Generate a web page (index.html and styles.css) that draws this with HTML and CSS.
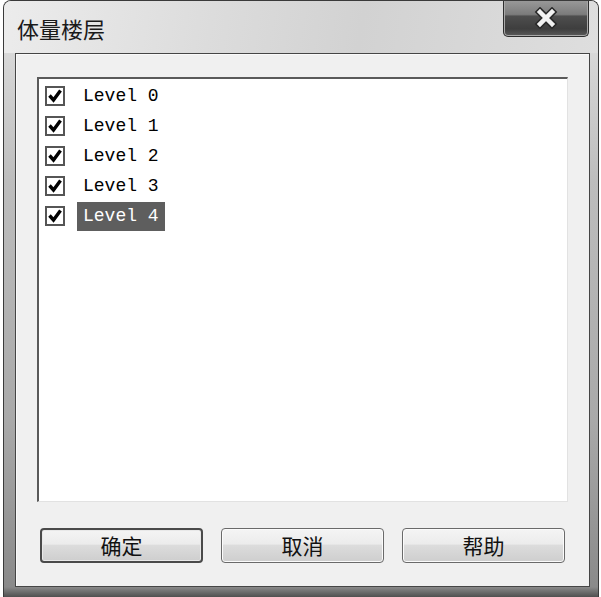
FILE: index.html
```html
<!DOCTYPE html>
<html lang="zh">
<head>
    <meta charset="UTF-8">
    <title>体量楼层</title>
    <link rel="stylesheet" href="styles.css">
</head>
<body>
    <div class="window">
        <div class="titlebar">
            <span class="title">体量楼层</span>
            <div class="close">
                <svg width="28" height="22" viewBox="0 0 28 22">
                    <path d="M8 5 L20 17 M20 5 L8 17" stroke="#2a2a2a" stroke-width="7.5" stroke-linecap="square"/>
                    <path d="M8 5 L20 17 M20 5 L8 17" stroke="#f2f2f2" stroke-width="4.5" stroke-linecap="square"/>
                </svg>
            </div>
        </div>

        <div class="client">
            <div class="listbox">
                <div class="item">
                    <span class="check"><svg width="20" height="20" viewBox="0 0 20 20"><rect x="1" y="1" width="18" height="18" fill="#fff" stroke="#555" stroke-width="2"/><path d="M4.5 9.5 L8.5 14 L15.5 4.5" fill="none" stroke="#000" stroke-width="3.4"/></svg></span>
                    <span class="label">Level 0</span>
                </div>
                <div class="item">
                    <span class="check"><svg width="20" height="20" viewBox="0 0 20 20"><rect x="1" y="1" width="18" height="18" fill="#fff" stroke="#555" stroke-width="2"/><path d="M4.5 9.5 L8.5 14 L15.5 4.5" fill="none" stroke="#000" stroke-width="3.4"/></svg></span>
                    <span class="label">Level 1</span>
                </div>
                <div class="item">
                    <span class="check"><svg width="20" height="20" viewBox="0 0 20 20"><rect x="1" y="1" width="18" height="18" fill="#fff" stroke="#555" stroke-width="2"/><path d="M4.5 9.5 L8.5 14 L15.5 4.5" fill="none" stroke="#000" stroke-width="3.4"/></svg></span>
                    <span class="label">Level 2</span>
                </div>
                <div class="item">
                    <span class="check"><svg width="20" height="20" viewBox="0 0 20 20"><rect x="1" y="1" width="18" height="18" fill="#fff" stroke="#555" stroke-width="2"/><path d="M4.5 9.5 L8.5 14 L15.5 4.5" fill="none" stroke="#000" stroke-width="3.4"/></svg></span>
                    <span class="label">Level 3</span>
                </div>
                <div class="item">
                    <span class="check"><svg width="20" height="20" viewBox="0 0 20 20"><rect x="1" y="1" width="18" height="18" fill="#fff" stroke="#555" stroke-width="2"/><path d="M4.5 9.5 L8.5 14 L15.5 4.5" fill="none" stroke="#000" stroke-width="3.4"/></svg></span>
                    <span class="label selected">Level 4</span>
                </div>
            </div>

            <div class="buttons">
                <button class="btn default">确定</button>
                <button class="btn">取消</button>
                <button class="btn">帮助</button>
            </div>
        </div>
    </div>
</body>
</html>
```

FILE: styles.css
```css
/* dialog window */
body {
    margin: 0;
    width: 601px;
    height: 597px;
    overflow: hidden;
    background: #fff;
    font-family: "Noto Sans CJK SC", "Liberation Sans", sans-serif;
}

.window {
    box-sizing: border-box;
    width: 596px;
    height: 597px;
    margin-left: 3px;
    border: 1px solid #3a3a3a;
    border-bottom: none;
    border-radius: 8px 8px 0 0;
    overflow: hidden;
    display: flex;
    flex-direction: column;
    background: linear-gradient(to bottom, #e4e4e4 0, #d6d6d6 60px, #bdbdbd 180px, #a9a9a9 420px, #8a8a8a 586px, #4a4a4a 597px);
}

.titlebar {
    height: 52px;
    display: flex;
    justify-content: space-between;
    align-items: flex-start;
    padding-left: 13px;
    padding-right: 9px;
    background: linear-gradient(100deg, #ececec 0, #dcdcdc 35%, #d2d2d2 60%, #dedede 100%);
}

.title {
    margin-top: 12px;
    font-size: 22px;
    line-height: 30px;
    color: #1a1a1a;
}

.close {
    box-sizing: border-box;
    width: 86px;
    height: 37px;
    margin-top: -1px;
    border: 1px solid #2e2e2e;
    border-top: none;
    border-radius: 0 0 5px 5px;
    display: flex;
    align-items: center;
    justify-content: center;
    background: linear-gradient(to bottom, #9a9a9a 0, #7c7c7c 40%, #4e4e4e 45%, #3e3e3e 80%, #5a5a5a 100%);
    box-shadow: inset 0 0 0 1px #a8a8a8;
}

.client {
    flex: 1;
    box-sizing: border-box;
    margin: 0 8px 10px 11px;
    border: 1px solid #454545;
    background: #f0f0f0;
    box-shadow: inset 1px 1px 0 #fafafa;
    padding: 23px 21px 0 21px;
    display: flex;
    flex-direction: column;
}

.listbox {
    box-sizing: border-box;
    height: 425px;
    background: #fff;
    border-top: 2px solid #5a5a5a;
    border-left: 2px solid #5a5a5a;
    border-right: 1px solid #e2e2e2;
    border-bottom: 1px solid #e2e2e2;
    padding-top: 2px;
}

.item {
    height: 30px;
    display: flex;
    align-items: center;
}

.check {
    width: 20px;
    height: 20px;
    margin-left: 6px;
    margin-right: 12px;
}

.check svg {
    display: block;
}

.label {
    font-family: "Liberation Mono", monospace;
    font-size: 18px;
    line-height: 29px;
    height: 29px;
    padding: 0 6px;
    color: #000;
}

.label.selected {
    background: #5e5e5e;
    color: #fff;
}

.buttons {
    display: flex;
    gap: 18px;
    margin-top: 26px;
    padding: 0 2px 0 3px;
}

.btn {
    box-sizing: border-box;
    width: 163px;
    height: 35px;
    font-family: "Noto Sans CJK SC", sans-serif;
    font-size: 21px;
    line-height: 1;
    color: #111;
    border: 1px solid #6a6a6a;
    border-radius: 4px;
    background: linear-gradient(to bottom, #f4f4f4 0, #ececec 45%, #dcdcdc 50%, #cecece 100%);
    box-shadow: inset 0 0 0 1px #fbfbfb;
    padding: 0;
}

.btn.default {
    border: 2px solid #4a4a4a;
    box-shadow: inset 0 0 0 1px #e8e8e8;
}
```
